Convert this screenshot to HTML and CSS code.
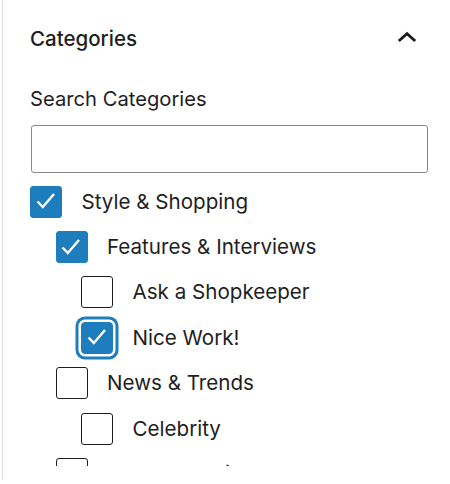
FILE: index.html
```html
<!DOCTYPE html>
<html lang="en">
<head>
<meta charset="utf-8">
<title>Categories</title>
<link rel="stylesheet" href="styles.css">
</head>
<body>
<div class="panel">
  <div class="header">
    <h2 class="title">Categories</h2>
    <svg class="chevron" width="24" height="24" viewBox="0 0 24 24" aria-hidden="true"><polyline points="3.8,16 12,8.6 20.2,16" fill="none" stroke="#1e1e1e" stroke-width="2.8"/></svg>
  </div>
  <label class="search-label" for="search">Search Categories</label>
  <input class="search-input" id="search" type="text">
  <ul class="tree">
    <li class="row lvl0"><span class="box checked"><svg viewBox="0 0 32 32"><polyline points="7.5,16.5 12.8,22 24,9"/></svg></span><span class="name">Style &amp; Shopping</span></li>
    <li class="row lvl1"><span class="box checked"><svg viewBox="0 0 32 32"><polyline points="7.5,16.5 12.8,22 24,9"/></svg></span><span class="name">Features &amp; Interviews</span></li>
    <li class="row lvl2"><span class="box"></span><span class="name">Ask a Shopkeeper</span></li>
    <li class="row lvl2"><span class="box checked focused"><svg viewBox="0 0 32 32"><polyline points="7.5,16.5 12.8,22 24,9"/></svg></span><span class="name">Nice Work!</span></li>
    <li class="row lvl1"><span class="box"></span><span class="name">News &amp; Trends</span></li>
    <li class="row lvl2"><span class="box"></span><span class="name">Celebrity</span></li>
    <li class="row lvl1"><span class="box"></span><span class="name">Product Reviews</span></li>
  </ul>
</div>
</body>
</html>
```
FILE: styles.css
```css
html, body {
  margin: 0;
  padding: 0;
  background: #fff;
}
body {
  font-family: Inter, "Noto Sans", "Liberation Sans", sans-serif;
  color: #1e1e1e;
}
.panel {
  margin-left: 2px;
  height: 480px;
  border-left: 1px solid #e0e0e0;
  padding-left: 27px;
  padding-right: 22px;
  display: flex;
  flex-direction: column;
  box-sizing: border-box;
  overflow: hidden;
}
.header {
  height: 73px;
  display: flex;
  align-items: center;
  justify-content: space-between;
  padding-right: 9px;
  flex-shrink: 0;
}
.title {
  margin: 0;
  font-size: 20.5px;
  font-weight: 500;
  line-height: 28px;
  padding-top: 4px;
}
.chevron {
  display: block;
}
.search-label {
  display: block;
  margin-top: 12px;
  font-size: 20.2px;
  line-height: 28px;
}
.search-input {
  display: block;
  margin: 12px 0 0 1px;
  width: 397px;
  height: 48px;
  box-sizing: border-box;
  border: 1px solid #8a8a8a;
  border-radius: 3px;
  background: #fff;
  flex-shrink: 0;
}
.tree {
  list-style: none;
  margin: 6px 0 0;
  padding: 0;
  height: 287px;
  overflow: hidden;
  flex-shrink: 0;
}
.row {
  height: 45.4px;
  display: flex;
  align-items: center;
}
.lvl1 { padding-left: 25.5px; }
.lvl2 { padding-left: 51px; }
.box {
  width: 32px;
  height: 32px;
  box-sizing: border-box;
  border: 1.5px solid #1e1e1e;
  border-radius: 3px;
  flex-shrink: 0;
  margin-right: 19.5px;
  position: relative;
}
.box.checked {
  background: #1e7dbd;
  border-color: #1e7dbd;
}
.box svg {
  position: absolute;
  left: -1.5px;
  top: -1.5px;
  width: 32px;
  height: 32px;
}
.box polyline {
  fill: none;
  stroke: #fff;
  stroke-width: 2.4;
}
.box.focused {
  box-shadow: 0 0 0 2.5px #fff, 0 0 0 5.5px #1e7dbd;
  border-radius: 4px;
}
.name {
  font-size: 20.6px;
  line-height: 28px;
  white-space: nowrap;
}
```
